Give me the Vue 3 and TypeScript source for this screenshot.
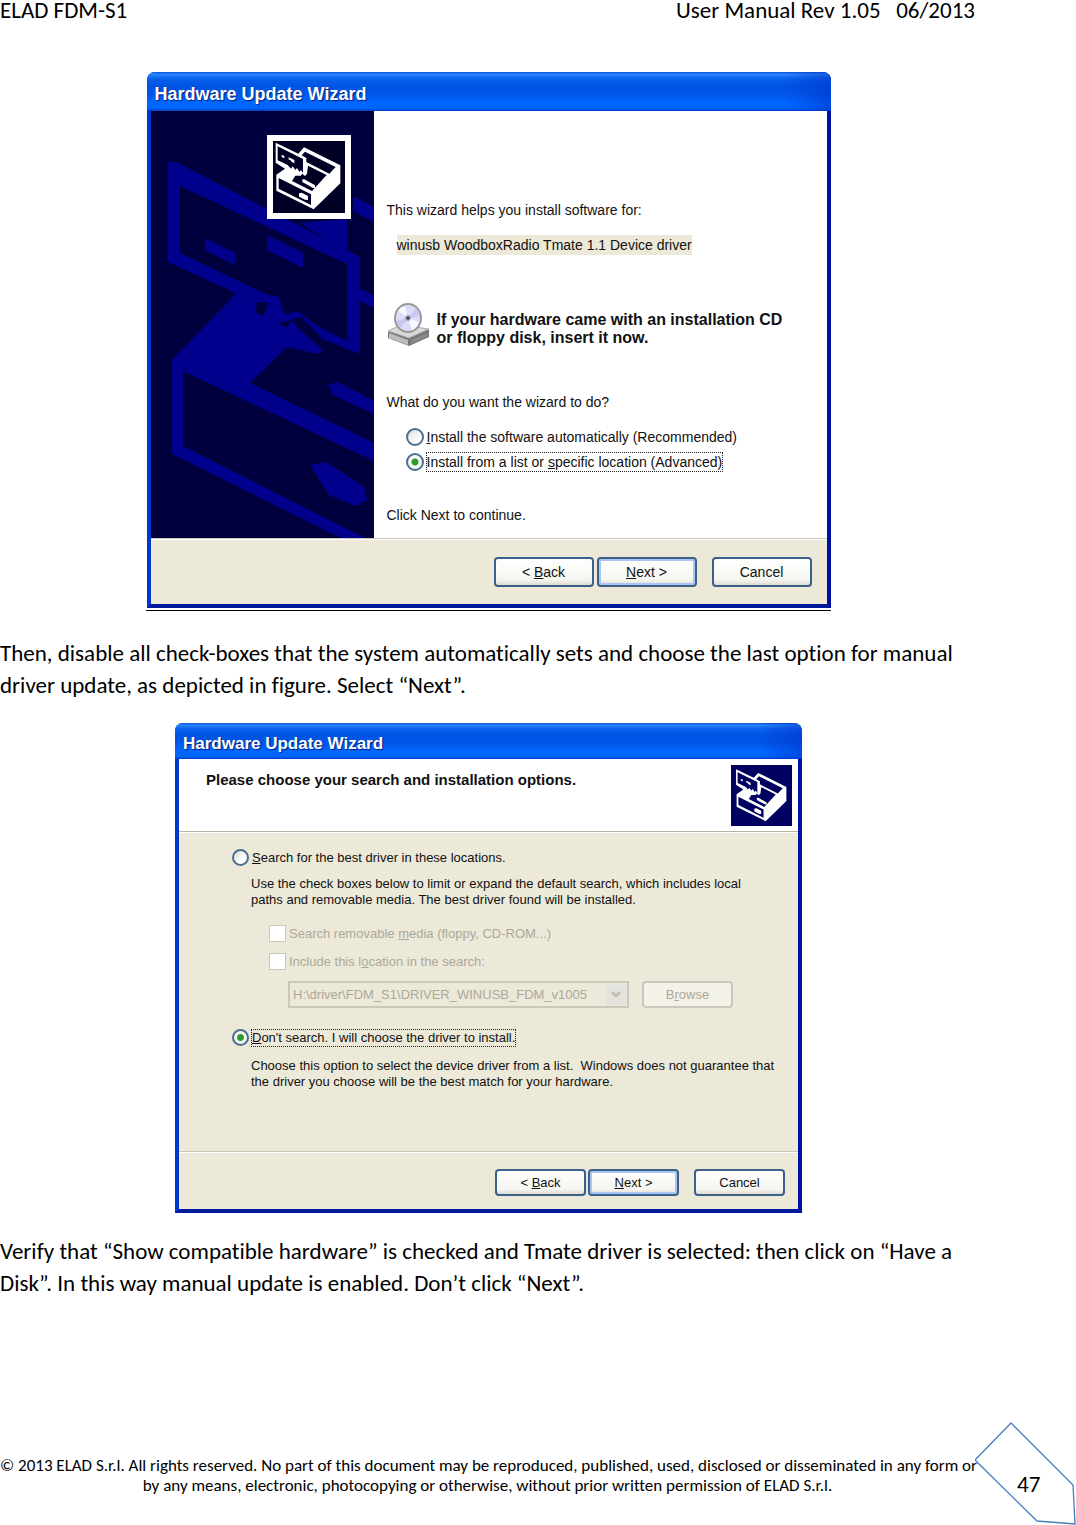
<script setup lang="ts">
import { ref } from 'vue'

interface WizardButton {
  before: string
  key: string
  after: string
  isDefault?: boolean
}

const wizardButtons: WizardButton[] = [
  { before: '< ', key: 'B', after: 'ack' },
  { before: '', key: 'N', after: 'ext >', isDefault: true },
  { before: 'Cancel', key: '', after: '' },
]

const installMode = ref<'auto' | 'advanced'>('advanced')
const searchMode = ref<'search' | 'choose'>('choose')
const driverPath = ref('H:\\driver\\FDM_S1\\DRIVER_WINUSB_FDM_v1005')
</script>

<template>
  <div class="page">
    <svg class="defs" width="0" height="0" aria-hidden="true">
      <symbol id="hardware" viewBox="40 47 216 216">
        <path fill="#fff" d="M48 52 L116 85 L133 66 L242 120 V174 L162 252 L50 196 V148 L76 130 L48 112 Z" />
        <path class="ink" d="M54 63 L130 101 V143 L124 134 L120 140 L112 128 L107 134 L99 123 L94 130 L84 119 L54 105 Z" />
        <path class="ink" d="M136 79 L228 125 L209 145 L140 110 V98 L126 90 Z" />
        <path class="ink" d="M145 121 L201 149 L157 197 L97 167 L107 151 L124 151 L127 145 L136 152 L142 145 Z" />
        <path class="ink" d="M57 158 L154 207 V239 L57 190 Z" />
        <path fill="#fff" d="M66 88 L74 92 V99 L66 95 Z M87 96 L104 104 V114 L96 110 L92 104 L87 103 Z" />
        <path fill="#fff" d="M128 162 L134 162 L166 180 V188 L160 188 L128 170 Z M118 204 L126 202 L145 212 V224 L136 223 L118 214 Z" />
      </symbol>
    </svg>

    <header class="running-head">
      <span>ELAD FDM-S1</span>
      <span>User Manual Rev 1.05 &nbsp;&nbsp;06/2013</span>
    </header>

    <main class="content">
      <figure class="figure figure-ruled">
        <section class="dialog dialog-large">
          <h2 class="titlebar">Hardware Update Wizard</h2>
          <div class="welcome">
            <div class="sidebar">
              <svg class="watermark" viewBox="0 0 223 427" preserveAspectRatio="xMinYMin slice" aria-hidden="true">
                <defs>
                  <pattern id="mesh" width="4" height="4" patternUnits="userSpaceOnUse">
                    <rect width="4" height="4" fill="#000040" />
                    <path d="M0 0H4M0 0V4" stroke="#00002c" stroke-width="1" />
                  </pattern>
                </defs>
                <rect width="223" height="427" fill="url(#mesh)" />
                <g fill="#00008c">
                  <path fill-rule="evenodd" d="M17 51 H25 L209 146 V243 L196 238 L172 228 L158 214 L150 206 L140 209 L128 212 L118 192 L104 191 L17 151 Z M29 75 V142 L108 180 L118 184 L128 186 L134 204 L146 200 L165 214 L196 230 V153 Z" />
                  <path d="M54 127 L84 142 V154 L54 139 Z M116 124 L152 142 V157 L116 139 Z" />
                  <path d="M149 112 L196 108 V141 Z M202 85 L223 96 V111 L202 100 Z M209 178 L223 184 V197 L209 190 Z" />
                  <path d="M80 188 L84 182 L106 191 L104 201 L112 205 L118 192 L124 195 L127 212 L136 217 L140 209 L149 219 L172 239 L168 243 L136 236 L99 272 L223 332 V350 L32 260 V335 L214 427 H190 L21 343 V249 Z" />
                  <path d="M177 274 L186 271 L223 290 V303 L182 284 Z M159 354 L175 351 L213 376 L216 389 L205 395 L178 384 Z" />
                </g>
              </svg>
              <svg class="badge badge-framed" aria-hidden="true"><use href="#hardware" /></svg>
            </div>
            <div class="welcome-body">
              <p class="intro">This wizard helps you install software for:</p>
              <p class="device"><span>winusb WoodboxRadio Tmate 1.1 Device driver</span></p>
              <div class="media">
                <svg class="disc" viewBox="0 0 43 44" aria-hidden="true">
                  <path d="M1 29 L14 23 L42 27 V34 L22 43 L1 35 Z" fill="#777" />
                  <path d="M1 28 L14 22 L42 26 L22 35 Z" fill="#d9d9d9" stroke="#aaa" />
                  <path d="M2 30 L21 37 V42 L2 35 Z" fill="#bdbdbd" />
                  <path d="M24 37 L41 30 V33 L24 41 Z" fill="#8b8b8b" />
                  <ellipse cx="21" cy="15" rx="13" ry="14" fill="#dcdcf8" stroke="#999" stroke-width="2" />
                  <path d="M21 15 L11 8 A12 13 0 0 1 18 3 Z M21 15 L32 19 A12 13 0 0 1 25 27 Z" fill="#f7f7ff" />
                  <path d="M21 15 L9 18 A12 13 0 0 0 14 25 Z M21 15 L29 5 A12 13 0 0 1 33 13 Z" fill="#c9c6f2" />
                  <circle cx="21" cy="15" r="3" fill="#a5a5c4" />
                  <circle cx="21" cy="15" r="1.5" fill="#333" />
                </svg>
                <p><strong>If your hardware came with an installation CD<br />or floppy disk, insert it now.</strong></p>
              </div>
              <p class="question">What do you want the wizard to do?</p>
              <label class="option">
                <input v-model="installMode" type="radio" name="install" value="auto" />
                <span class="caption"><u>I</u>nstall the software automatically (Recommended)</span>
              </label>
              <label class="option">
                <input v-model="installMode" type="radio" name="install" value="advanced" />
                <span class="caption focus">Install from a list or <u>s</u>pecific location (Advanced)</span>
              </label>
              <p class="hint">Click Next to continue.</p>
            </div>
          </div>
          <div class="actions">
            <button v-for="b in wizardButtons" :key="b.before + b.key" type="button" :class="{ default: b.isDefault }">{{ b.before }}<u>{{ b.key }}</u>{{ b.after }}</button>
          </div>
        </section>
      </figure>

      <p class="prose">Then, disable all check-boxes that the system automatically sets and choose the last option for manual driver update, as depicted in figure. Select “Next”.</p>

      <figure class="figure">
        <section class="dialog dialog-small">
          <h2 class="titlebar">Hardware Update Wizard</h2>
          <div class="banner">
            <strong>Please choose your search and installation options.</strong>
            <svg class="badge badge-plain" viewBox="0 0 61 61" aria-hidden="true"><use href="#hardware" x="3" y="3" width="56" height="56" /></svg>
          </div>
          <div class="choices">
            <label class="option">
              <input v-model="searchMode" type="radio" name="search" value="search" />
              <span class="caption"><u>S</u>earch for the best driver in these locations.</span>
            </label>
            <p class="explain">Use the check boxes below to limit or expand the default search, which includes local<br />paths and removable media. The best driver found will be installed.</p>
            <label class="option check">
              <input type="checkbox" disabled />
              <span class="caption">Search removable <u>m</u>edia (floppy, CD-ROM...)</span>
            </label>
            <label class="option check">
              <input type="checkbox" disabled />
              <span class="caption">Include this l<u>o</u>cation in the search:</span>
            </label>
            <div class="location">
              <div class="combo">
                <select v-model="driverPath" disabled aria-label="Driver location">
                  <option>{{ driverPath }}</option>
                </select>
                <span class="arrow"><svg viewBox="0 0 12 8" aria-hidden="true"><path d="M2 1 L6 5 L10 1" fill="none" stroke="#c3c1b2" stroke-width="3" /></svg></span>
              </div>
              <button class="browse" type="button" disabled>B<u>r</u>owse</button>
            </div>
            <label class="option">
              <input v-model="searchMode" type="radio" name="search" value="choose" />
              <span class="caption focus"><u>D</u>on't search. I will choose the driver to install.</span>
            </label>
            <p class="explain">Choose this option to select the device driver from a list.&nbsp; Windows does not guarantee that<br />the driver you choose will be the best match for your hardware.</p>
          </div>
          <div class="actions">
            <button v-for="b in wizardButtons" :key="b.before + b.key" type="button" :class="{ default: b.isDefault }">{{ b.before }}<u>{{ b.key }}</u>{{ b.after }}</button>
          </div>
        </section>
      </figure>

      <p class="prose">Verify that “Show compatible hardware” is checked and Tmate driver is selected: then click on “Have a Disk”. In this way manual update is enabled. Don’t click “Next”.</p>
    </main>

    <footer class="page-foot">
      <p class="legal">© 2013 ELAD S.r.l. All rights reserved. No part of this document may be reproduced, published, used, disclosed or disseminated in any form or<br />by any means, electronic, photocopying or otherwise, without prior written permission of ELAD S.r.l.</p>
      <div class="folio">
        <svg viewBox="0 0 101 103" aria-hidden="true">
          <path d="M36 1 L98 63 L100 102 L62 99 L0 38 Z" fill="none" stroke="#4a7ebb" stroke-width="1.3" />
        </svg>
        <span>47</span>
      </div>
    </footer>
  </div>
</template>

<style>
body {
  background: #fff;
}
</style>

<style scoped>
.page {
  box-sizing: border-box;
  min-height: 100vh;
  display: flex;
  flex-direction: column;
  font-family: Carlito, Lato, sans-serif;
  font-size: 23px;
  font-variant-ligatures: none;
  line-height: 32px;
  color: #000;
}
p,
h2,
figure {
  margin: 0;
}
.defs {
  position: absolute;
}
.running-head {
  display: flex;
  justify-content: space-between;
  margin-right: 101px;
  line-height: 20px;
}
.content {
  margin-right: 99px;
}
.figure {
  display: flex;
  justify-content: center;
}
.figure-ruled {
  width: 685px;
  max-width: 100%;
  margin: 52px auto 4px;
  padding-bottom: 2px;
  border-bottom: 1px solid #000;
}
.prose {
  padding: 22px 0;
}
.dialog {
  box-sizing: border-box;
  width: 100%;
  display: flex;
  flex-direction: column;
  border: solid #0038c8;
  border-width: 0 4px 4px;
  border-right-color: #0010a0;
  border-bottom-color: #00189c;
  border-radius: 8px 8px 0 0;
  background: #ece9d8;
  font-family: "Liberation Sans", Arial, sans-serif;
  color: #111;
}
.dialog-large {
  max-width: 684px;
  font-size: 14px;
  line-height: 18px;
}
.dialog-small {
  max-width: 627px;
  font-size: 13px;
  line-height: 16px;
}
.dialog-large strong {
  font-size: 16px;
}
.dialog-small strong {
  font-size: 15px;
}
.titlebar {
  margin: 0 -4px;
  padding: 6px 8px 0;
  border-radius: 8px 8px 0 0;
  background:
    linear-gradient(90deg, transparent 93%, #0030c880),
    linear-gradient(#0a50d8 0, #2a86fa 6%, #0a62ee 16%, #0054e3 35%, #0056e8 55%, #0066ff 78%, #0066fc 92%, #0040c8 100%);
  color: #fff;
  font-size: 18px;
  line-height: 33px;
  text-shadow: 1px 1px 1px #002080;
}
.dialog-small .titlebar {
  padding-top: 5px;
  font-size: 17px;
  line-height: 31px;
}
.welcome {
  display: flex;
  background: #fff;
}
.sidebar {
  flex: 0 0 223px;
  display: grid;
  background: #000040;
}
.watermark {
  grid-area: 1 / 1;
  width: 100%;
  height: 100%;
}
.ink {
  fill: inherit;
}
.badge-framed {
  grid-area: 1 / 1;
  box-sizing: border-box;
  justify-self: end;
  width: 84px;
  height: 84px;
  margin: 24px 23px 0 0;
  border: 6px solid #fff;
  background: #000024;
  fill: #000024;
}
.welcome-body {
  flex: 1;
  padding: 90px 8px 14px 13px;
}
.device {
  padding: 16px 0 0 10px;
  line-height: 20px;
}
.device span {
  display: inline-block;
  background: #ece9d8;
}
.media {
  display: flex;
  align-items: flex-end;
  gap: 7px;
  margin: 48px 0 46px;
}
.disc {
  flex: none;
  width: 43px;
  height: 44px;
}
.option {
  display: flex;
  align-items: center;
  gap: 3px;
}
.option input {
  appearance: none;
  box-sizing: border-box;
  flex: none;
  width: 18px;
  height: 18px;
  margin: 0;
  border: 2px solid #4a7090;
  border-radius: 50%;
  background: linear-gradient(135deg, #dcdcd8, #fff 70%);
}
.option input:checked {
  background: radial-gradient(circle, #2c9c2c 3px, #f6f8f4 4px);
}
.focus {
  outline: 1px dotted #222;
}
.welcome-body .option {
  margin: 7px 0 0 19px;
}
.welcome-body .question + .option {
  margin-top: 17px;
}
.hint {
  padding-top: 35px;
}
.actions {
  display: flex;
  justify-content: flex-end;
  gap: 3px;
  padding: 18px 15px 17px;
  border-top: 1px solid #cbc8ba;
  box-shadow: inset 0 1px #fff;
}
.actions button,
.browse {
  box-sizing: border-box;
  width: 100px;
  height: 30px;
  padding: 0;
  border: 2px solid #3b608c;
  border-radius: 4px;
  background: linear-gradient(#fff, #f5f5f0 80%, #dedbd0);
  color: #111;
  font: inherit;
}
.actions .default {
  box-shadow: inset 0 0 0 2px #a9c5f2;
}
.actions button:last-child {
  margin-left: 12px;
}
.dialog-small .actions {
  gap: 2px;
  padding: 17px 13px 13px;
}
.dialog-small .actions button,
.browse {
  width: 91px;
  height: 27px;
}
.dialog-small .actions button:last-child {
  margin-left: 13px;
}
.banner {
  display: flex;
  justify-content: space-between;
  align-items: flex-start;
  padding: 6px 6px 5px 27px;
  border-bottom: 1px solid #b8b5a7;
  background: #fff;
}
.banner strong {
  padding-top: 7px;
}
.badge-plain {
  width: 61px;
  height: 61px;
  background: #000060;
  fill: #000060;
}
.choices {
  padding: 17px 8px 61px 53px;
  box-shadow: inset 0 1px #fff;
}
.choices .option input {
  width: 17px;
  height: 17px;
}
.explain {
  padding: 10px 0 17px 19px;
}
.choices .explain:last-child {
  padding: 12px 0 0 19px;
}
.choices .check {
  margin: 0 0 11px 37px;
  color: #aca899;
}
.choices .check input {
  border: 1px solid #cac8bb;
  border-radius: 0;
  background: #fff;
}
.location {
  display: flex;
  gap: 13px;
  margin: 0 0 21px 56px;
}
.combo {
  display: flex;
  box-sizing: border-box;
  width: 341px;
  height: 27px;
  padding: 1px;
  border: 2px solid #cac8bb;
}
.combo select {
  appearance: none;
  flex: 1;
  min-width: 0;
  padding: 0 2px;
  border: 0;
  background: none;
  color: #aca899;
  font: inherit;
  opacity: 1;
}
.arrow {
  display: flex;
  align-items: center;
  justify-content: center;
  width: 20px;
  background: #e4e3dd;
}
.arrow svg {
  width: 12px;
  height: 8px;
}
.browse {
  border-color: #cac8bb;
  background: #f3f1e8;
  color: #aca899;
}
.page-foot {
  display: flex;
  align-items: flex-end;
  margin-top: auto;
}
.legal {
  flex: 1;
  min-width: 0;
  padding-bottom: 29px;
  font-size: 17px;
  line-height: 20px;
  text-align: center;
  white-space: nowrap;
}
.folio {
  display: grid;
  flex: none;
  width: 101px;
}
.folio svg {
  grid-area: 1 / 1;
  width: 101px;
  height: 103px;
}
.folio span {
  grid-area: 1 / 1;
  align-self: center;
  padding: 20px 0 0 42px;
  line-height: 22px;
}
</style>
